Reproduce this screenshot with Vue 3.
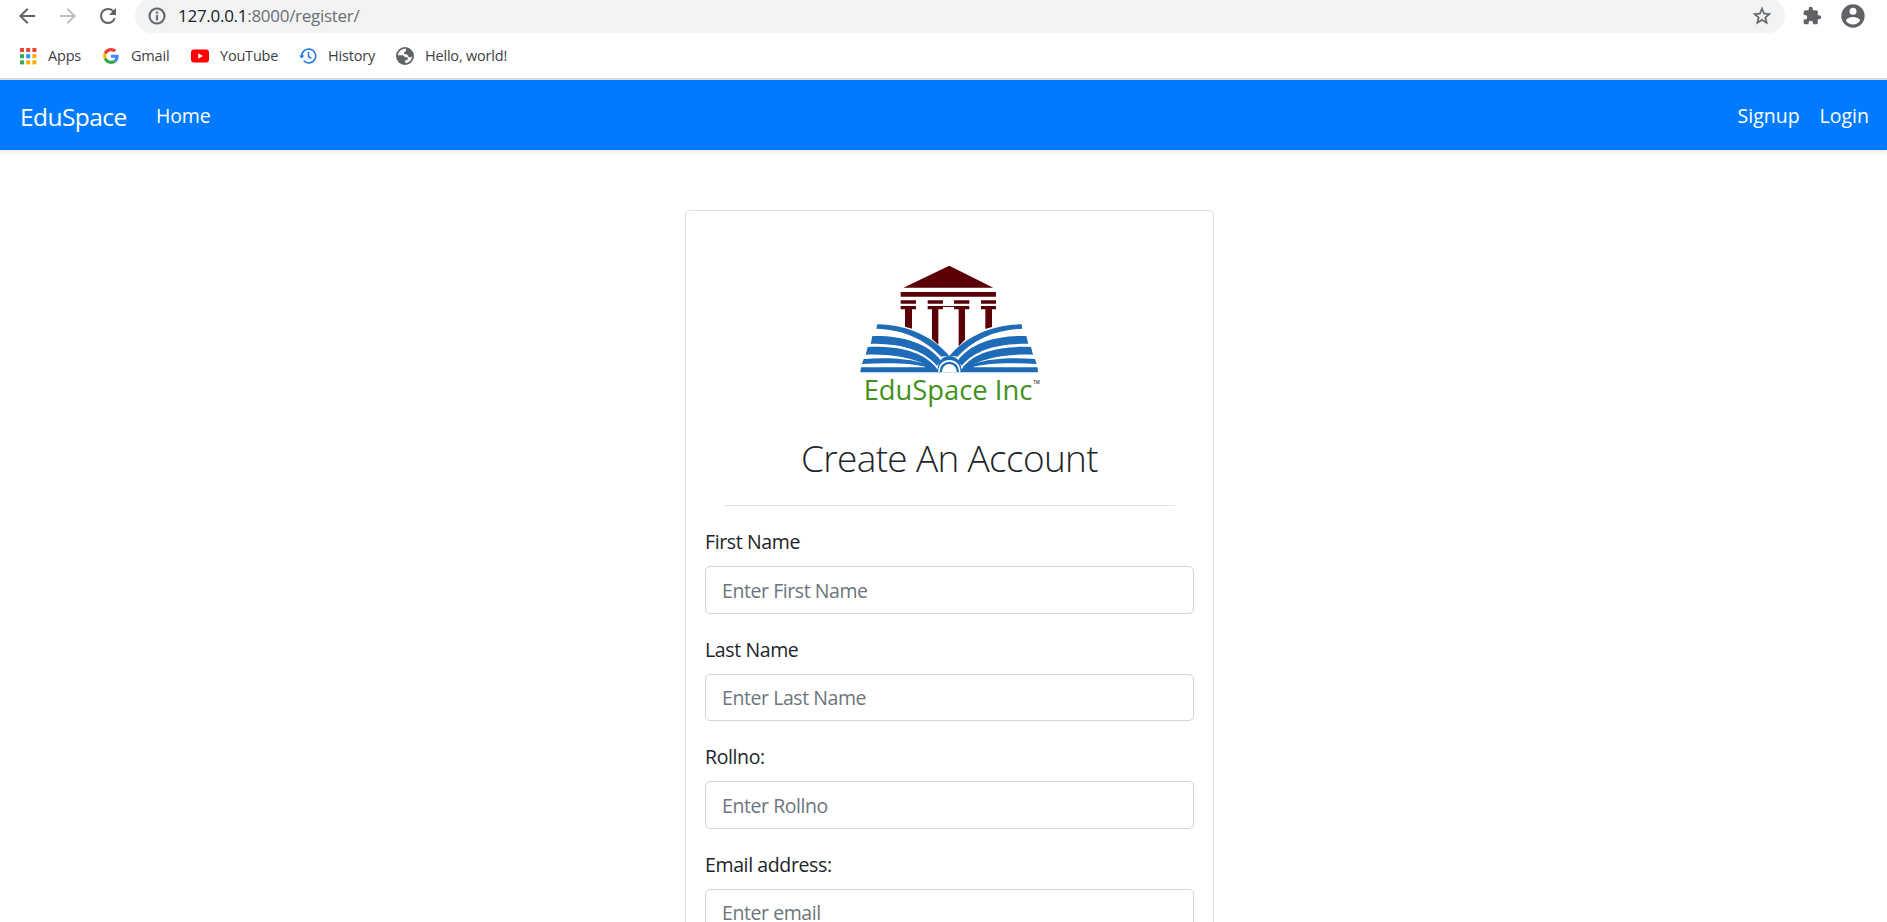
<script setup>
const fields = [
  { id: 'first', label: 'First Name', placeholder: 'Enter First Name' },
  { id: 'last', label: 'Last Name', placeholder: 'Enter Last Name' },
  { id: 'roll', label: 'Rollno:', placeholder: 'Enter Rollno' },
  { id: 'email', label: 'Email address:', placeholder: 'Enter email' },
]
const dots = ['#ea4335', '#ea4335', '#ea4335', '#34a853', '#2196f3', '#fbab00', '#34a853', '#fbab00', '#fbab00']
</script>

<template>
  <div class="window">
    <header class="toolbar">
      <svg class="tool back" viewBox="0 0 24 24"><path d="M20 11H7.83l5.59-5.59L12 4l-8 8 8 8 1.41-1.41L7.83 13H20z" /></svg>
      <svg class="tool forward" viewBox="0 0 24 24"><path d="M12 4l-1.41 1.41L16.17 11H4v2h12.17l-5.58 5.59L12 20l8-8z" /></svg>
      <svg class="tool reload" viewBox="0 0 24 24"><path d="M17.65 6.35A7.96 7.96 0 0 0 12 4a8 8 0 1 0 7.73 10h-2.08A6 6 0 1 1 12 6c1.66 0 3.14.69 4.22 1.78L13 11h7V4z" /></svg>
      <div class="address">
        <svg class="info" viewBox="0 0 24 24"><path d="M11 17h2v-6h-2zm1-15a10 10 0 1 0 0 20 10 10 0 0 0 0-20m0 18a8 8 0 1 1 0-16 8 8 0 0 1 0 16M11 9h2V7h-2z" /></svg>
        <span class="url"><b>127.0.0.1</b>:8000/register/</span>
        <svg class="star" viewBox="0 0 24 24"><path d="M22 9.24l-7.19-.62L12 2 9.19 8.63 2 9.24l5.46 4.73L5.82 21 12 17.27 18.18 21l-1.63-7.03zM12 15.4l-3.76 2.27 1-4.28-3.32-2.88 4.38-.38L12 6.1l1.71 4.04 4.38.38-3.32 2.88 1 4.28z" /></svg>
      </div>
      <svg class="puzzle" viewBox="0 0 24 24"><path d="M20.5 11H19V7a2 2 0 0 0-2-2h-4V3.500a2.500 2.500 0 0 0-5 0V5H4a2 2 0 0 0-1.990 2v3.800H3.500a2.700 2.700 0 0 1 0 5.400H2V20a2 2 0 0 0 2 2h3.800v-1.500a2.700 2.700 0 0 1 5.400 0V22H17a2 2 0 0 0 2-2v-4h1.500a2.500 2.500 0 0 0 0-5" /></svg>
      <svg class="avatar" viewBox="0 0 24 24"><path d="M12 2a10 10 0 1 0 0 20 10 10 0 0 0 0-20m0 3a3 3 0 1 1 0 6 3 3 0 0 1 0-6m0 14.200a7.200 7.200 0 0 1-6-3.220c.030-1.990 4-3.080 6-3.080s5.970 1.090 6 3.080a7.200 7.200 0 0 1-6 3.220" /></svg>
    </header>

    <div class="bookmarks">
      <div class="mark apps">
        <svg viewBox="0 0 18 18"><rect v-for="(c, i) in dots" :key="i" :x="1 + (i % 3) * 6.2" :y="1 + Math.floor(i / 3) * 6.2" width="4" height="4" :fill="c" /></svg>
        <span>Apps</span>
      </div>
      <div class="mark gmail">
        <svg viewBox="-3 -3 54 54">
          <path fill="#EA4335" d="M24 9.500c3.540 0 6.710 1.220 9.210 3.600l6.850-6.850C35.900 2.380 30.470 0 24 0 14.620 0 6.510 5.380 2.560 13.220l7.980 6.190C12.430 13.720 17.740 9.500 24 9.500z" />
          <path fill="#4285F4" d="M46.980 24.550c0-1.570-.15-3.090-.38-4.550H24v9.020h12.940c-.58 2.960-2.260 5.480-4.780 7.180l7.730 6c4.510-4.180 7.090-10.360 7.090-17.650z" />
          <path fill="#FBBC05" d="M10.530 28.590a14.500 14.500 0 0 1 0-9.180l-7.980-6.190a24 24 0 0 0 0 21.560z" />
          <path fill="#34A853" d="M24 48c6.480 0 11.930-2.130 15.890-5.810l-7.730-6c-2.150 1.450-4.920 2.300-8.160 2.300-6.260 0-11.570-4.220-13.470-9.910l-7.980 6.190C6.510 42.620 14.620 48 24 48z" />
        </svg>
        <span>Gmail</span>
      </div>
      <div class="mark youtube">
        <svg viewBox="0 0 18 18"><rect y="2.500" width="18" height="13" rx="3" fill="#f00" /><path d="M7.200 6.200v5.600L12 9z" fill="#fff" /></svg>
        <span>YouTube</span>
      </div>
      <div class="mark history">
        <svg viewBox="0 0 18 18" fill="none" stroke="#1a73e8" stroke-width="1.500"><path d="M2.700 9A7 7 0 1 1 4.600 13.800M9.500 5v4.300l2.800 2" /><path d="M0 8.600h5.400L2.700 11.500z" fill="#1a73e8" stroke="none" /></svg>
        <span>History</span>
      </div>
      <div class="mark hello">
        <svg viewBox="0 0 18 18"><circle cx="9" cy="9" r="9" fill="#5f6368" /><path fill="#fff" d="M10.200 1.900C6 1.400 2.500 4.200 1.900 8.200L6.200 8.300C7.800 8.300 8.600 9 8.600 10.200H10.600C12 10.200 12.300 11.400 11.800 12.300C11.300 13.100 10.200 13.100 9.300 13.200V16.100C13.200 16 16 12.900 16.100 9.300C15.100 10.300 13.400 10.600 12.400 9.700C11.700 9 11.900 7.900 11 7.600C9.600 7.400 8.100 7.400 8 6.100C7.900 4.900 8.600 4.600 9.600 4.400C10.500 4.100 9.700 2.700 10.200 1.900" /></svg>
        <span>Hello, world!</span>
      </div>
    </div>

    <nav class="navbar">
      <a class="brand">EduSpace</a>
      <a class="home">Home</a>
      <a class="signup">Signup</a>
      <a class="login">Login</a>
    </nav>

    <main class="card">
      <svg class="logo" viewBox="0 0 660 510">
        <g fill="#5a0006">
          <path d="M328 47L460 113H190z" />
          <path d="M182 126h286v14H182zM182 151h46v10h-46zM263 151h46v10h-46zM342 151h46v10h-46zM423 151h45v10h-45z" />
          <path d="M182 168h46v10h-12v58l-21-6v-52h-13zM263 168h46v10h-14v106l-19-17v-89h-13zM342 168h46v10h-13v91l-19 20V178h-14zM423 168h45v10h-12v53l-20 6v-59h-13z" />
          <path d="M308 168h36v3h-36z" />
        </g>
        <g fill="#1e6bb8">
          <path d="M112 223C205 224 280 262 328 318Q316 317 304 320C252 266 190 239 109 236z" />
          <path d="M97 258C185 256 263 278 303 332L291 347C245 294 175 281 92 281z" />
          <path d="M83 291C165 288 245 301 287 351L283 358C225 321 155 312 77 314z" />
          <path d="M71 327C150 322 230 325 283 354L278 360L266 354C225 339 145 338 66 342z" />
          <path d="M63 352H255Q268 347 263 343Q282 347 288 353L300 367H61z" />
          <path d="M545 223C451 224 376 262 328 318Q340 317 352 320C404 266 466 239 547 236z" />
          <path d="M559 258C471 256 393 278 353 332L365 347C411 294 481 281 565 281z" />
          <path d="M573 291C491 288 411 301 369 351L373 358C431 321 501 312 579 314z" />
          <path d="M585 327C506 322 426 325 373 354L378 360L390 354C431 339 511 338 590 342z" />
          <path d="M593 352H401Q388 347 393 343Q374 347 368 353L356 367H594z" />
          <path d="M293 367C290 338 306 318 328 318S367 338 363 367z" />
        </g>
        <path d="M297 367C296 321 360 321 359 367" fill="none" stroke="#fff" stroke-width="5" />
        <path d="M306 367C306 334 350 334 350 367z" fill="#fff" />
        <text class="logo-name" x="71" y="450" textLength="506" lengthAdjust="spacingAndGlyphs">EduSpace Inc</text>
        <text class="logo-tm" x="580" y="403">TM</text>
      </svg>
      <h1>Create An Account</h1>
      <hr />
      <div v-for="f in fields" :key="f.id" class="group">
        <label :for="f.id">{{ f.label }}</label>
        <input :id="f.id" type="text" :placeholder="f.placeholder" />
      </div>
    </main>
  </div>
</template>

<style>
body { margin: 0; overflow: hidden; background: #fff; }
</style>

<style scoped>
.window {
  height: 922px;
  overflow: hidden;
  background: #fff;
  font-family: "Open Sans", "Noto Sans", sans-serif;
  color: #212529;
}
svg { display: block; flex: none; }
.toolbar {
  display: flex;
  align-items: center;
  height: 33px;
  box-sizing: border-box;
  padding-left: 15px;
  fill: #5f6368;
}
.tool { width: 24px; height: 24px; margin: -2px 16px 0 0; }
.back { margin-right: 17px; }
.forward { fill: #bdc1c6; }
.reload { margin-right: 15px; }
.address {
  display: flex;
  align-items: center;
  width: 1650px;
  height: 35px;
  margin-top: -2px;
  box-sizing: border-box;
  padding: 0 11px 0 12px;
  border-radius: 18px;
  background: #f1f3f4;
}
.info { width: 20px; height: 20px; stroke: #5f6368; stroke-width: 0.500px; }
.url { flex: 1; padding-left: 11px; font-size: 17px; letter-spacing: -0.280px; line-height: 24px; color: #6b6f73; }
.url b { font-weight: 400; color: #202124; }
.star { width: 22px; height: 22px; margin-right: 1px; stroke: #5f6368; stroke-width: 0.300px; }
.puzzle { width: 20px; height: 20px; margin: -1px 0 0 17px; }
.avatar { width: 28px; height: 28px; margin: -2px 0 0 17px; }
.bookmarks {
  display: grid;
  grid-template-columns: 84px 88px 108px 97px auto;
  align-items: center;
  height: 47px;
  box-sizing: border-box;
  padding: 1px 0 0 19px;
  border-bottom: 2px solid #d9dce0;
}
.mark { display: flex; align-items: center; gap: 11px; font-size: 14.500px; letter-spacing: -0.200px; line-height: 20px; color: #3c4043; white-space: nowrap; }
.mark svg { width: 18px; height: 18px; }
.mark.gmail { margin-left: -1px; }
.navbar {
  display: flex;
  align-items: center;
  height: 70px;
  box-sizing: border-box;
  padding: 2px 18px 0 20px;
  background: #007bff;
  color: #fff;
  font-size: 19.500px;
  line-height: 30px;
  box-shadow: 0 3px 5px rgba(0, 0, 0, 0.075);
}
.brand { width: 136px; padding-top: 1px; font-size: 24.500px; letter-spacing: -0.550px; }
.home { flex: 1; letter-spacing: -0.150px; }
.signup { margin-right: 20px; }
.card {
  width: 529px;
  height: 900px;
  margin: 60px 0 0 685px;
  box-sizing: border-box;
  padding: 39px 19px 0;
  border: 1px solid #dfdfdf;
  border-radius: 5px;
}
.logo { width: 220px; height: 170px; margin: 0 auto 0 135px; }
.logo-name { font-size: 84px; fill: #41911b; }
.logo-tm { font-size: 13px; font-weight: 600; fill: #333; }
h1 { margin: 15px 0 0; font-size: 37px; line-height: 45px; font-weight: 300; letter-spacing: -0.680px; text-align: center; white-space: nowrap; }
hr { height: 1px; margin: 25px 19px 20.250px; border: 0; background: #e2e2e2; }
.group { margin-bottom: 20px; }
label { display: block; height: 29px; padding-top: 1px; margin-bottom: 10px; font-size: 19.500px; letter-spacing: -0.380px; line-height: 30px; }
input {
  display: block;
  width: 489px;
  height: 47.500px;
  box-sizing: border-box;
  padding: 0 16px;
  border: 1px solid #ced4da;
  border-radius: 5px;
  background: #fff;
  font: 19.500px/30px "Open Sans", "Noto Sans", sans-serif;
  letter-spacing: -0.430px;
}
input::placeholder { color: #6c757d; opacity: 1; }
</style>
